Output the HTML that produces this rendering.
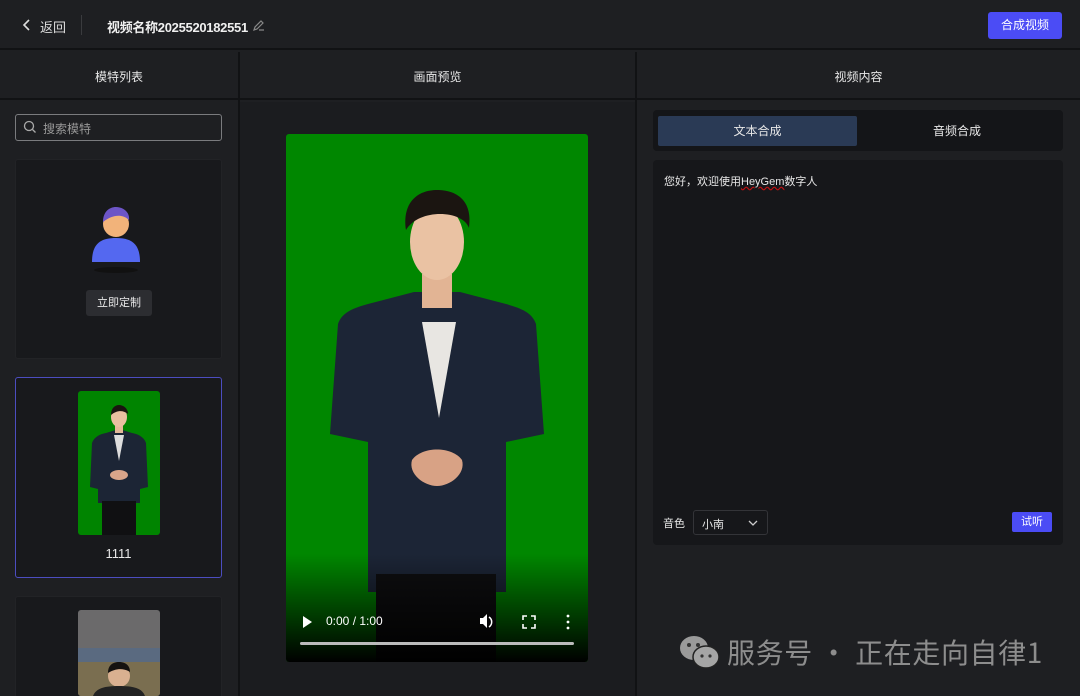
<!DOCTYPE html>
<html><head><meta charset="utf-8"><style>
*{margin:0;padding:0;box-sizing:border-box}
html{width:1080px;height:696px;overflow:hidden}
body{width:1080px;height:696px;overflow:hidden;background:#1e1f22;font-family:"Liberation Sans","Noto Sans CJK SC",sans-serif;color:#e8e8e8;position:relative;font-size:12px}
.a{position:absolute}
</style></head><body>
<div class="a" style="left:0;top:0;width:1080px;height:50px;background:#1e1f22;border-bottom:2px solid #111214"></div>
<svg class="a" style="left:22px;top:19px" width="10" height="12"><path d="M7 1L2 6l5 5" stroke="#ddd" stroke-width="1.6" fill="none"/></svg>
<div class="a" style="left:40px;top:17px;font-size:13px;color:#ddd">返回</div>
<div class="a" style="left:81px;top:15px;width:1px;height:20px;background:#3a3b3e"></div>
<div class="a" style="left:107px;top:17px;font-size:13px;font-weight:bold;color:#f0f0f0;letter-spacing:-0.3px">视频名称2025520182551</div>
<svg class="a" style="left:252px;top:18px" width="14" height="14"><path d="M2 12l1-3 6-6 2 2-6 6zM7 12h5" stroke="#888" stroke-width="1.2" fill="none"/></svg>
<div class="a" style="left:988px;top:12px;width:74px;height:27px;background:#4b4cf5;border-radius:3px;font-size:12px;color:#fff;text-align:center;line-height:27px">合成视频</div>
<div class="a" style="left:0;top:52px;width:1080px;height:48px;border-bottom:2px solid #111214"></div>
<div class="a" style="left:238px;top:52px;width:2px;height:644px;background:#111214"></div>
<div class="a" style="left:635px;top:52px;width:2px;height:644px;background:#111214"></div>
<div class="a" style="left:0;top:68px;width:238px;text-align:center;font-size:12px">模特列表</div>
<div class="a" style="left:240px;top:68px;width:395px;text-align:center;font-size:12px">画面预览</div>
<div class="a" style="left:637px;top:68px;width:443px;text-align:center;font-size:12px">视频内容</div>
<div class="a" style="left:15px;top:114px;width:207px;height:27px;border:1px solid #7a7b7e;border-radius:3px"></div>
<svg class="a" style="left:23px;top:120px" width="14" height="14"><circle cx="6" cy="6" r="4.5" stroke="#aaa" stroke-width="1.3" fill="none"/><path d="M9.5 9.5l3 3" stroke="#aaa" stroke-width="1.3"/></svg>
<div class="a" style="left:43px;top:120px;color:#999;font-size:12px">搜索模特</div>
<div class="a" style="left:15px;top:159px;width:207px;height:200px;background:#18191c;border:1px solid #222326;border-radius:3px"></div>
<svg class="a" style="left:88px;top:200px" width="60" height="75"><ellipse cx="28" cy="70" rx="22" ry="3" fill="#111"/><path d="M4 62c0-18 8-24 24-24s24 6 24 24z" fill="#5468f0"/><circle cx="28" cy="24" r="13" fill="#f2b37a"/><path d="M15 22c0-10 6-15 13-15s14 5 13 13c-6-6-16-6-26 2z" fill="#6d55c7"/></svg>
<div class="a" style="left:86px;top:290px;width:66px;height:26px;background:#2c2d31;border-radius:3px;text-align:center;line-height:26px;font-size:11px">立即定制</div>
<div class="a" style="left:15px;top:377px;width:207px;height:201px;background:#18191c;border:1px solid #4c4dc0;border-radius:3px"></div>
<div class="a" style="left:78px;top:391px;width:82px;height:144px;background:#008400;border-radius:3px;overflow:hidden">
<svg width="82" height="144"><path d="M12 96l2-44c2-6 8-9 14-10l13-4 13 4c6 1 12 4 14 10l2 44-8 2 0 14-21 0-21 0 0-14z" fill="#1c2535"/><rect x="24" y="110" width="34" height="34" fill="#101012"/><path d="M36 44h10l-5 26z" fill="#ddd"/><rect x="37" y="32" width="8" height="10" fill="#e5b899"/><ellipse cx="41" cy="26" rx="8" ry="10" fill="#e9c0a0"/><path d="M33 24c0-7 4-10 8-10s9 3 9 9c-5-4-11-4-17 1z" fill="#1a1410"/><ellipse cx="41" cy="84" rx="9" ry="5" fill="#d9a58a"/></svg></div>
<div class="a" style="left:15px;top:546px;width:207px;text-align:center;font-size:13px">1111</div>
<div class="a" style="left:15px;top:596px;width:207px;height:110px;background:#18191c;border:1px solid #222326;border-radius:3px"></div>
<div class="a" style="left:78px;top:610px;width:82px;height:86px;background:#6b6a6b;border-radius:3px;overflow:hidden">
<div style="position:absolute;top:38px;width:82px;height:48px;background:#7a6e50"></div>
<svg style="position:absolute;top:38px" width="82" height="48"><rect width="82" height="14" fill="#5a6a80"/><circle cx="41" cy="28" r="11" fill="#d9b090"/><path d="M30 25c0-8 5-11 11-11s11 3 11 10c-6-4-14-4-22 1z" fill="#151210"/><path d="M15 48c3-8 12-10 26-10s23 2 26 10z" fill="#222"/></svg></div>
<div class="a" style="left:240px;top:102px;width:395px;height:594px;background:#1b1c1f"></div>
<div class="a" style="left:286px;top:134px;width:302px;height:528px;background:#008700;border-radius:3px;overflow:hidden">
<svg width="302" height="528">
<defs><linearGradient id="g" x1="0" y1="0" x2="0" y2="1"><stop offset="0" stop-color="#000" stop-opacity="0"/><stop offset="1" stop-color="#000" stop-opacity="1"/></linearGradient></defs>
<path d="M44 300l8-110c4-12 16-16 30-20l46-12 46 0 46 12c14 4 26 8 30 20l8 110-38 8 0 150-92 0-0 0-46 0 0-150z" fill="#1c2536"/>
<path d="M136 188h34l-17 96z" fill="#e8e6e2"/>
<rect x="136" y="140" width="30" height="34" fill="#e2b494"/>
<ellipse cx="151" cy="108" rx="27" ry="38" fill="#eac2a3"/>
<path d="M120 96c-4-28 12-40 31-40s36 10 32 38c-6-18-50-20-63 2z" fill="#1b1511"/>
<path d="M90 440h120v88h-120z" fill="#0e0e10"/>
<path d="M126 326c10-14 40-14 50 0c4 14-12 26-25 26s-29-12-25-26z" fill="#d8a285"/>
<rect y="420" width="302" height="108" fill="url(#g)"/>
<path d="M17 482l9 6-9 6z" fill="#fff"/>
<text x="40" y="491" fill="#fff" font-size="12" font-family="Liberation Sans">0:00 / 1:00</text>
<path d="M194 484h3l4-4v14l-4-4h-3z" fill="#fff"/><path d="M203 483a6 6 0 010 10" stroke="#fff" stroke-width="1.5" fill="none"/>
<path d="M237 486v-4h4M245 482h4v4M249 490v4h-4M241 494h-4v-4" stroke="#fff" stroke-width="1.6" fill="none"/>
<circle cx="282" cy="482" r="1.4" fill="#fff"/><circle cx="282" cy="488" r="1.4" fill="#fff"/><circle cx="282" cy="494" r="1.4" fill="#fff"/>
<rect x="14" y="508" width="274" height="3" rx="1.5" fill="#bbb"/>
</svg></div>
<div class="a" style="left:637px;top:102px;width:443px;height:594px;background:#1e1f22"></div>
<div class="a" style="left:653px;top:110px;width:410px;height:41px;background:#141518;border-radius:4px"></div>
<div class="a" style="left:658px;top:116px;width:199px;height:30px;background:#2a3a55;border-radius:2px;text-align:center;line-height:30px;font-size:12px">文本合成</div>
<div class="a" style="left:857px;top:116px;width:200px;height:30px;text-align:center;line-height:30px;font-size:12px">音频合成</div>
<div class="a" style="left:653px;top:160px;width:410px;height:385px;background:#16171a;border-radius:4px"></div>
<div class="a" style="left:664px;top:173px;font-size:11px">您好，欢迎使用<span style="text-decoration:underline wavy #c01010">HeyGem</span>数字人</div>
<div class="a" style="left:663px;top:515px;font-size:11px">音色</div>
<div class="a" style="left:693px;top:510px;width:75px;height:25px;border:1px solid #333438;border-radius:3px;font-size:11px;padding:5px 0 0 8px">小南</div>
<svg class="a" style="left:748px;top:519px" width="10" height="8"><path d="M1 2l4 4 4-4" stroke="#ccc" stroke-width="1.3" fill="none"/></svg>
<div class="a" style="left:1012px;top:512px;width:40px;height:20px;background:#4b4cf5;border-radius:2px;text-align:center;line-height:20px;font-size:11px;color:#fff">试听</div>
<svg class="a" style="left:679px;top:635px" width="42" height="34"><ellipse cx="15" cy="13" rx="14" ry="12" fill="#9a9a9a"/><ellipse cx="27" cy="22" rx="13" ry="11" fill="#a5a5a5" stroke="#222" stroke-width="1.5"/><circle cx="10" cy="10" r="2" fill="#333"/><circle cx="19" cy="10" r="2" fill="#333"/><circle cx="23" cy="21" r="1.6" fill="#333"/><circle cx="31" cy="21" r="1.6" fill="#333"/></svg>
<div class="a" style="left:727px;top:634px;font-size:28px;color:#8d8d8d;font-family:'Noto Sans CJK SC',sans-serif;line-height:36px;letter-spacing:0.6px">服务号 · 正在走向自律1</div>
</body></html>
